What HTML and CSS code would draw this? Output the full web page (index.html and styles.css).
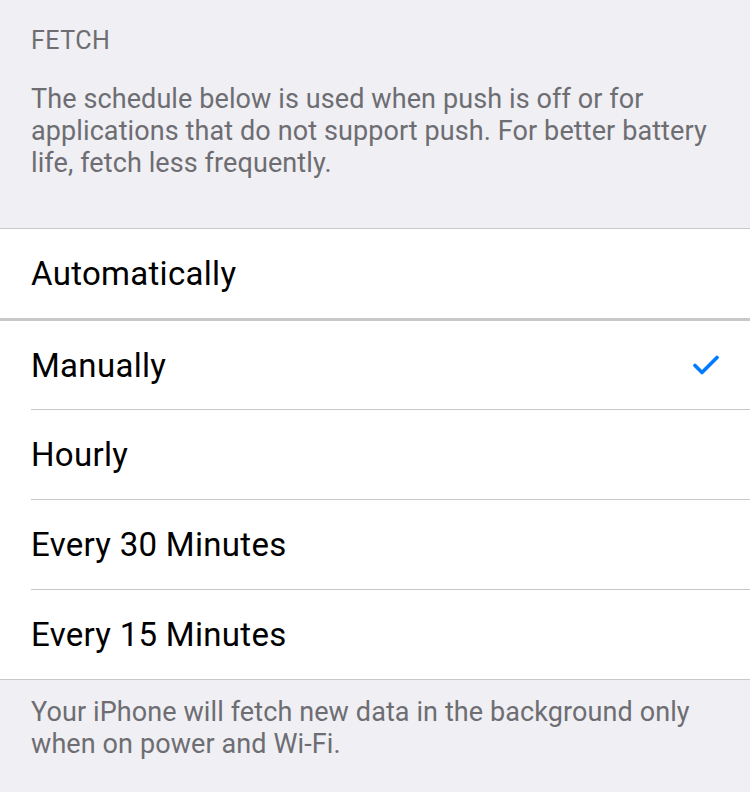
FILE: index.html
```html
<!DOCTYPE html>
<html>
<head>
<meta charset="utf-8">
<link rel="stylesheet" href="styles.css">
</head>
<body>
<div class="page">
  <div class="header">
    <div class="title">FETCH</div>
    <div class="desc">The schedule below is used when push is off or for applications that do not support push. For better battery life, fetch less frequently.</div>
  </div>
  <div class="group first">
    <div class="row"><span class="label">Automatically</span></div>
  </div>
  <div class="group second">
    <div class="row"><span class="label">Manually</span>
      <svg class="check" width="26" height="22" viewBox="0 0 26 22"><path d="M2 11.5 L9 18.5 L24 3.5" fill="none" stroke="#007aff" stroke-width="3.6" stroke-linecap="round" stroke-linejoin="round"/></svg>
    </div>
    <div class="row"><span class="label">Hourly</span></div>
    <div class="row"><span class="label">Every 30 Minutes</span></div>
    <div class="row"><span class="label">Every 15 Minutes</span></div>
  </div>
  <div class="footer">Your iPhone will fetch new data in the background only when on power and Wi-Fi.</div>
</div>
</body>
</html>
```
FILE: styles.css
```css
html, body {
  margin: 0;
  padding: 0;
  background: #efeff4;
}
.page {
  width: 750px;
  height: 792px;
  font-family: "Roboto", "Liberation Sans", sans-serif;
  overflow: hidden;
}
.header {
  padding: 27px 31px 0 31px;
  height: 228px;
  box-sizing: border-box;
  color: #6d6d72;
}
.title {
  font-size: 25px;
  line-height: 28px;
  letter-spacing: 0.5px;
}
.desc {
  margin-top: 28px;
  font-size: 27px;
  line-height: 32px;
  letter-spacing: 0.1px;
}
.group {
  background: #fff;
}
.group.first {
  border-top: 1px solid #c8c7cc;
}
.group.second {
  border-top: 3px solid #c8c8c8;
  border-bottom: 1px solid #c8c7cc;
}
.row {
  height: 89px;
  margin-left: 31px;
  padding-right: 31px;
  display: flex;
  align-items: center;
  justify-content: space-between;
  font-size: 33px;
  letter-spacing: 0.3px;
  color: #000;
}
.second .row:first-child {
  height: 88px;
}
.second .row + .row {
  border-top: 1px solid #c8c7cc;
}
.footer {
  padding: 16px 31px 0 31px;
  font-size: 27px;
  line-height: 32px;
  letter-spacing: 0.1px;
  color: #6d6d72;
}
```
